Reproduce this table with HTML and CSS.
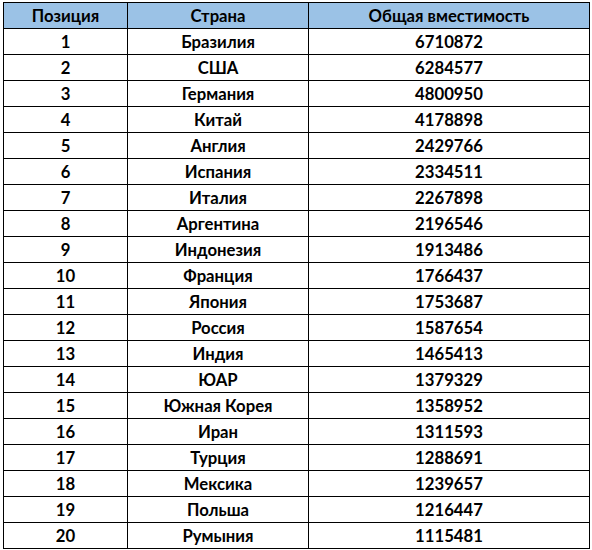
FILE: index.html
```html
<!DOCTYPE html>
<html lang="ru">
<head>
<meta charset="utf-8">
<link rel="stylesheet" href="styles.css">
</head>
<body>
<table class="rank">
<colgroup><col class="c1"><col class="c2"><col class="c3"></colgroup>
<thead>
<tr><th>Позиция</th><th>Страна</th><th>Общая вместимость</th></tr>
</thead>
<tbody>
<tr><td>1</td><td>Бразилия</td><td>6710872</td></tr>
<tr><td>2</td><td>США</td><td>6284577</td></tr>
<tr><td>3</td><td>Германия</td><td>4800950</td></tr>
<tr><td>4</td><td>Китай</td><td>4178898</td></tr>
<tr><td>5</td><td>Англия</td><td>2429766</td></tr>
<tr><td>6</td><td>Испания</td><td>2334511</td></tr>
<tr><td>7</td><td>Италия</td><td>2267898</td></tr>
<tr><td>8</td><td>Аргентина</td><td>2196546</td></tr>
<tr><td>9</td><td>Индонезия</td><td>1913486</td></tr>
<tr><td>10</td><td>Франция</td><td>1766437</td></tr>
<tr><td>11</td><td>Япония</td><td>1753687</td></tr>
<tr><td>12</td><td>Россия</td><td>1587654</td></tr>
<tr><td>13</td><td>Индия</td><td>1465413</td></tr>
<tr><td>14</td><td>ЮАР</td><td>1379329</td></tr>
<tr><td>15</td><td>Южная Корея</td><td>1358952</td></tr>
<tr><td>16</td><td>Иран</td><td>1311593</td></tr>
<tr><td>17</td><td>Турция</td><td>1288691</td></tr>
<tr><td>18</td><td>Мексика</td><td>1239657</td></tr>
<tr><td>19</td><td>Польша</td><td>1216447</td></tr>
<tr><td>20</td><td>Румыния</td><td>1115481</td></tr>
</tbody>
</table>
</body>
</html>
```
FILE: styles.css
```css
html, body {
  margin: 0;
  padding: 0;
  background: #ffffff;
}
body {
  padding: 2px 0 0 3px;
  font-family: "Lato", "Open Sans", "Liberation Sans", sans-serif;
  font-weight: 700;
  font-size: 16.7px;
  color: #000000;
}
.rank {
  border-collapse: collapse;
  table-layout: fixed;
  width: 586px;
}
.c1 { width: 124px; }
.c2 { width: 181px; }
.c3 { width: 281px; }
.rank th,
.rank td {
  border: 1px solid #000000;
  height: 26px;
  padding: 0;
  text-align: center;
  vertical-align: middle;
  line-height: 20px;
  box-sizing: border-box;
}
.rank th {
  background: #9bc2e6;
  font-weight: 700;
}
```
